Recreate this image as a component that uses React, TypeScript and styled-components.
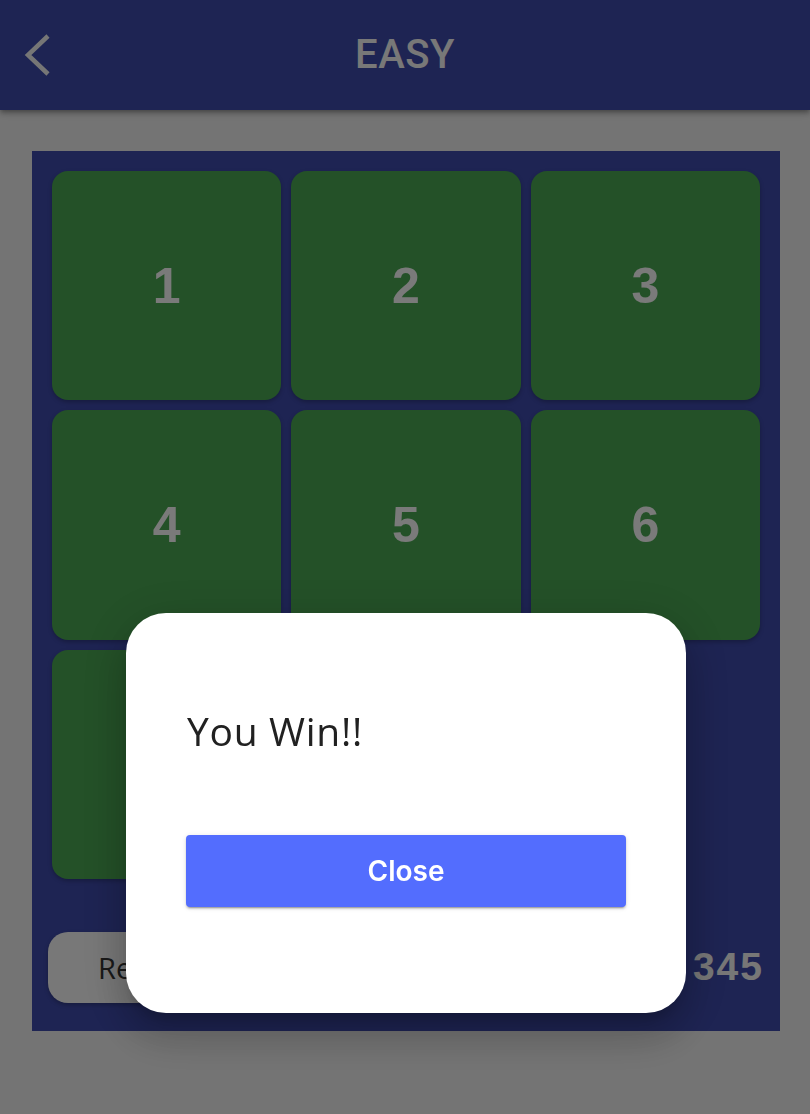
import React from "react";
import styled, { createGlobalStyle } from "styled-components";

const GlobalStyle = createGlobalStyle`
  html, body { margin: 0; padding: 0; }
  body {
    background: #e8e8e8;
    font-family: Roboto, "Noto Sans", sans-serif;
    overflow: hidden;
  }
  * { box-sizing: border-box; }
`;

const Page = styled.div`
  position: relative;
  min-height: 1114px;
`;

const Header = styled.header`
  position: relative;
  height: 110px;
  background: #3c48a6;
  display: grid;
  grid-template-columns: 72px 1fr 72px;
  align-items: center;
  overflow: hidden;
  box-shadow: 0 2px 4px -1px rgba(0, 0, 0, 0.25), 0 4px 5px 0 rgba(0, 0, 0, 0.16),
    0 1px 10px 0 rgba(0, 0, 0, 0.12);
  z-index: 1;
`;

const BackButton = styled.button`
  border: 0;
  background: transparent;
  padding: 0 0 0 23px;
  height: 110px;
  display: flex;
  align-items: center;
  cursor: pointer;
`;

const Title = styled.h1`
  margin: 0;
  text-align: center;
  font-family: Roboto, sans-serif;
  font-weight: 500;
  font-size: 40px;
  line-height: 40px;
  color: #f0f0f0;
  letter-spacing: 0.5px;
`;

const Ribbon = styled.div`
  position: absolute;
  top: -14px;
  right: -34px;
  width: 60px;
  height: 14px;
  background: #c0303f;
  transform: rotate(45deg);
`;

const Board = styled.section`
  margin: 41px 30px 0 32px;
  background: #3c48a6;
  padding: 20px 0 28px;
`;

const Grid = styled.div`
  margin: 0 20px;
  display: grid;
  grid-template-columns: repeat(3, 1fr);
  gap: 10px;
`;

const Tile = styled.div<{ $empty?: boolean }>`
  aspect-ratio: 1 / 1;
  border-radius: 16px;
  background: ${(p) => (p.$empty ? "transparent" : "#48a250")};
  box-shadow: ${(p) => (p.$empty ? "none" : "0 2px 4px rgba(0,0,0,0.25)")};
  display: flex;
  align-items: center;
  justify-content: center;
  font-family: "Liberation Sans", Arial, sans-serif;
  font-weight: 700;
  font-size: 50px;
  color: #f5f5f5;
`;

const Footer = styled.div`
  margin-top: 53px;
  padding: 0 18px 0 16px;
  display: flex;
  align-items: center;
  justify-content: space-between;
`;

const ResetButton = styled.button`
  height: 71px;
  padding: 0 50px;
  border: 0;
  border-radius: 20px;
  background: #f0f0f0;
  font-family: "Open Sans", sans-serif;
  font-size: 29px;
  color: #333;
  box-shadow: 0 2px 4px rgba(0, 0, 0, 0.25);
`;

const Score = styled.div`
  font-family: "Liberation Sans", Arial, sans-serif;
  font-weight: 700;
  font-size: 39px;
  letter-spacing: 2px;
  color: #eeeeee;
  margin-right: -2px;
`;

const Backdrop = styled.div`
  position: fixed;
  inset: 0;
  background: rgba(0, 0, 0, 0.5);
  display: flex;
  justify-content: center;
  align-items: flex-start;
  padding-top: 613px;
  padding-left: 2px;
  z-index: 10;
`;

const Dialog = styled.div`
  width: 560px;
  background: #ffffff;
  border-radius: 40px;
  padding: 95px 60px 106px;
  display: flex;
  flex-direction: column;
  box-shadow: 0 11px 15px -7px rgba(0, 0, 0, 0.2), 0 24px 38px 3px rgba(0, 0, 0, 0.14),
    0 9px 46px 8px rgba(0, 0, 0, 0.12);
`;

const DialogTitle = styled.h2`
  margin: 0 0 0 1px;
  font-family: "Open Sans", "Noto Sans", sans-serif;
  font-weight: 400;
  font-size: 39px;
  line-height: 1.2;
  letter-spacing: 0.7px;
  color: #212121;
`;

const CloseButton = styled.button`
  margin-top: 80px;
  height: 72px;
  width: 100%;
  border: 0;
  border-radius: 4px;
  background: #536dfe;
  color: #ffffff;
  font-family: Inter, Roboto, sans-serif;
  font-weight: 600;
  font-size: 28px;
  box-shadow: 0 3px 1px -2px rgba(0, 0, 0, 0.2), 0 2px 2px 0 rgba(0, 0, 0, 0.14),
    0 1px 5px 0 rgba(0, 0, 0, 0.12);
  cursor: pointer;
`;

const ChevronLeft = () => (
  <svg width="30" height="44" viewBox="0 0 30 44" fill="none">
    <polyline
      points="25,3 5,22 25,41"
      stroke="#ececec"
      strokeWidth="4.5"
      strokeLinecap="butt"
      strokeLinejoin="miter"
    />
  </svg>
);

const tiles = [1, 2, 3, 4, 5, 6, 7, 8, 0];

export default function App() {
  return (
    <>
      <GlobalStyle />
      <Page>
        <Header>
          <BackButton aria-label="Back">
            <ChevronLeft />
          </BackButton>
          <Title>EASY</Title>
          <span />
          <Ribbon />
        </Header>
        <Board>
          <Grid>
            {tiles.map((n) => (
              <Tile key={n} $empty={n === 0}>
                {n === 0 ? "" : n}
              </Tile>
            ))}
          </Grid>
          <Footer>
            <ResetButton>Reset</ResetButton>
            <Score>345</Score>
          </Footer>
        </Board>
        <Backdrop>
          <Dialog role="dialog">
            <DialogTitle>You Win!!</DialogTitle>
            <CloseButton>Close</CloseButton>
          </Dialog>
        </Backdrop>
      </Page>
    </>
  );
}
